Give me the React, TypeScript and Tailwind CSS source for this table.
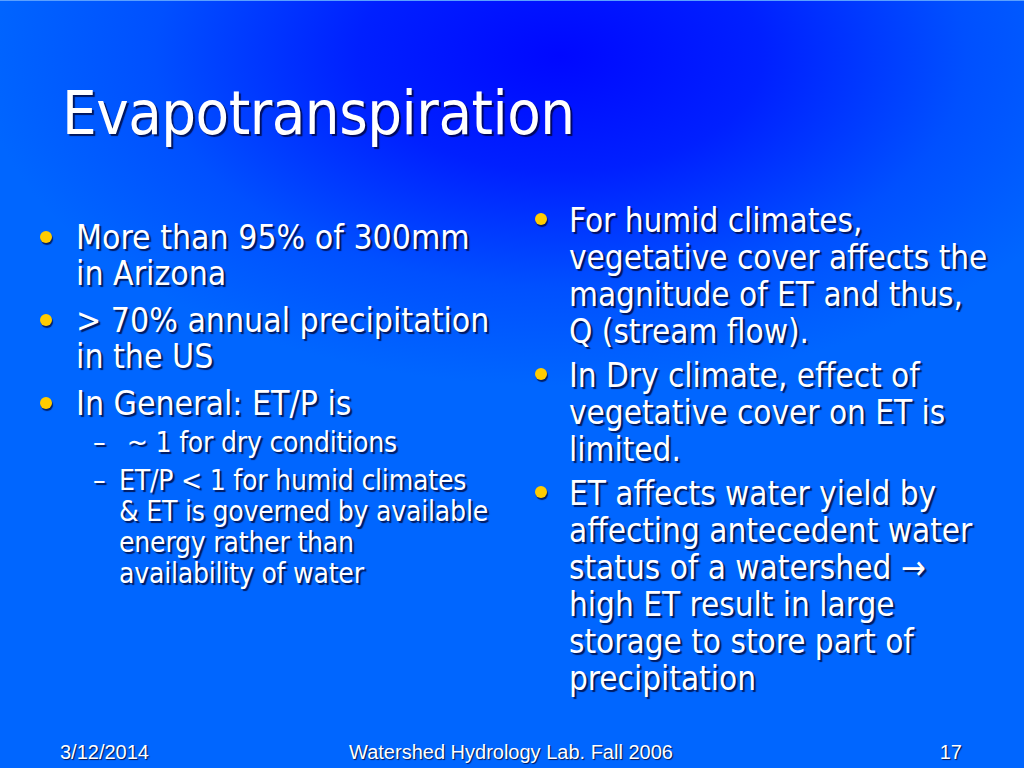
import React from 'react';

const font = 'font-["DejaVu_Sans_Condensed","DejaVu_Sans","Open_Sans",sans-serif]';
const shadow = '[text-shadow:2px_2px_1px_rgba(0,0,40,0.75)]';

function Dot() {
  return (
    <span className="mt-[11px] block h-[12px] w-[12px] rounded-full bg-[#ffcc00] shadow-[1px_2px_1px_rgba(0,0,40,0.7)]" />
  );
}

function Bullet({ children, size, col }: { children: React.ReactNode; size: string; col: string }) {
  return (
    <div className="flex">
      <div className={`${col} shrink-0 pl-[1px]`}>
        <Dot />
      </div>
      <div className={size}>{children}</div>
    </div>
  );
}

function Sub({ children }: { children: React.ReactNode }) {
  return (
    <div className="flex pl-[54px] text-[28px] leading-[31px] tracking-[-0.2px]">
      <span className="w-[26px] shrink-0">–</span>
      <span>{children}</span>
    </div>
  );
}

export default function App() {
  return (
    <div
      className={`relative h-[768px] w-[1024px] overflow-hidden border-t border-[#5aa0ff] bg-[#0066ff] bg-[radial-gradient(ellipse_580px_330px_at_560px_55px,#0008ff_0%,#0020ff_35%,#0050ff_70%,#0066ff_100%)] text-white ${font} ${shadow}`}
    >
      <h1 className="ml-[62px] mt-[75px] text-[61px] leading-[74px] tracking-[-0.5px]">Evapotranspiration</h1>

      <div className="mt-[52px] flex">
        <div className="ml-[39px] mt-[18px] w-[466px] flex flex-col gap-[11px]">
          <Bullet col="w-[37px]" size="text-[33.5px] leading-[36px]">
            More than 95% of 300mm
            <br />
            in Arizona
          </Bullet>
          <Bullet col="w-[37px]" size="text-[33.5px] leading-[36px]">
            &gt; 70% annual precipitation
            <br />
            in the US
          </Bullet>
          <div>
            <Bullet col="w-[37px]" size="text-[33.5px] leading-[36px]">In General: ET/P is</Bullet>
            <div className="mt-[5px] flex flex-col gap-[7px]">
              <Sub>&nbsp;~ 1 for dry conditions</Sub>
              <Sub>
                ET/P &lt; 1 for humid climates
                <br />
                &amp; ET is governed by available
                <br />
                energy rather than
                <br />
                availability of water
              </Sub>
            </div>
          </div>
        </div>

        <div className="ml-[29px] w-[480px] flex flex-col gap-[7px]">
          <Bullet col="w-[35px]" size="text-[33px] leading-[37px]">
            For humid climates,
            <br />
            vegetative cover affects the
            <br />
            magnitude of ET and thus,
            <br />
            Q (stream flow).
          </Bullet>
          <Bullet col="w-[35px]" size="text-[33px] leading-[37px]">
            In Dry climate, effect of
            <br />
            vegetative cover on ET is
            <br />
            limited.
          </Bullet>
          <Bullet col="w-[35px]" size="text-[33px] leading-[37px]">
            ET affects water yield by
            <br />
            affecting antecedent water
            <br />
            status of a watershed →
            <br />
            high ET result in large
            <br />
            storage to store part of
            <br />
            precipitation
          </Bullet>
        </div>
      </div>

      <div className='absolute bottom-[3px] left-0 right-0 flex items-center font-["Liberation_Sans",Arial,sans-serif] text-[20px] leading-[26px] [text-shadow:1px_1px_1px_rgba(0,0,40,0.8)]'>
        <span className="ml-[60px] w-[200px]">3/12/2014</span>
        <span className="flex-1 text-center">Watershed Hydrology Lab. Fall 2006</span>
        <span className="mr-[62px] w-[200px] text-right">17</span>
      </div>
    </div>
  );
}
